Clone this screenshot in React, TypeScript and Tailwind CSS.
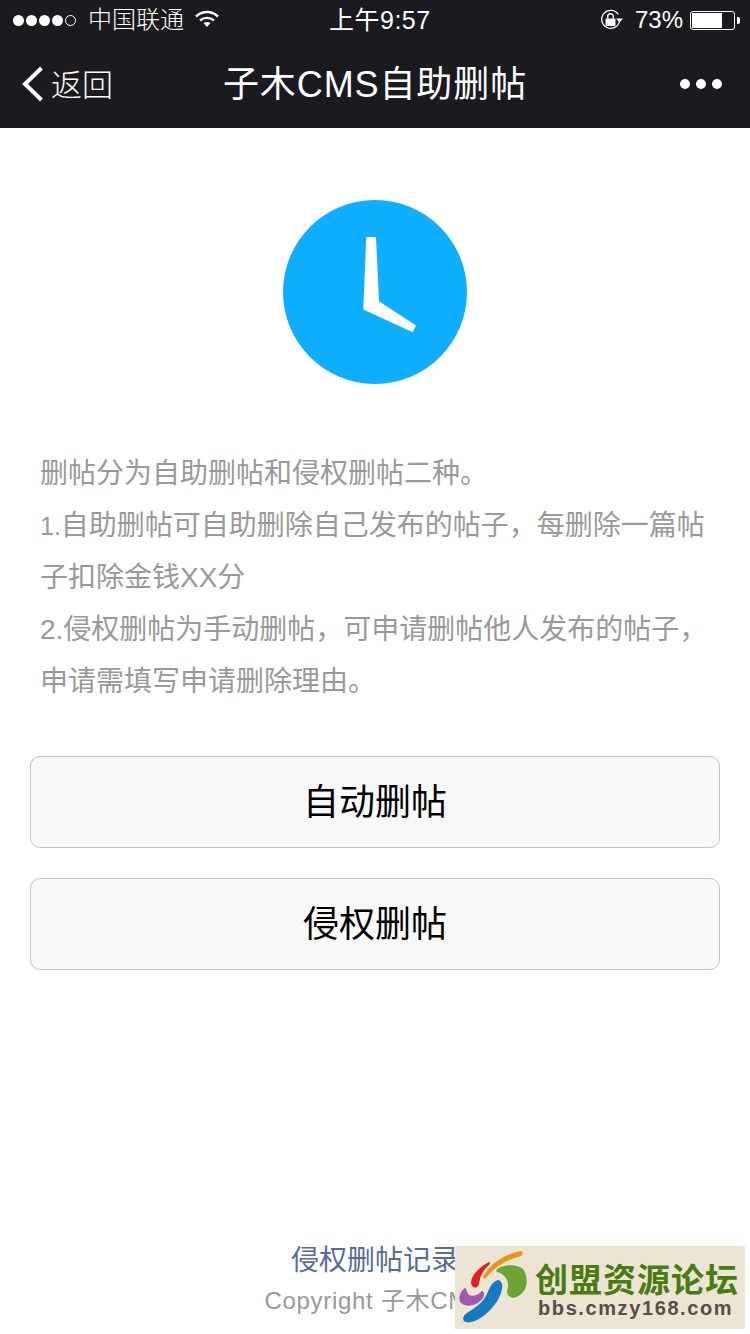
const sans = "font-['Liberation_Sans','Noto_Sans_CJK_SC',sans-serif]";

function StatusBar() {
    return (
        <div className="flex items-center justify-between h-10 pl-[13px] pr-[10px] text-white relative">
            <div className="flex items-center">
                <div className="flex items-center gap-[2px]">
                    <span className="w-[11px] h-[11px] rounded-full bg-white" />
                    <span className="w-[11px] h-[11px] rounded-full bg-white" />
                    <span className="w-[11px] h-[11px] rounded-full bg-white" />
                    <span className="w-[11px] h-[11px] rounded-full bg-white" />
                    <span className="w-[11px] h-[11px] rounded-full border border-white" />
                </div>
                <span className="ml-[12px] text-[24px] leading-none font-light">中国联通</span>
                <svg className="ml-[10px] mb-[3px]" width="26" height="19" viewBox="0 0 26 19" fill="none">
                    <path d="M2 7.5C8.5 1.5 17.5 1.5 24 7.5" stroke="#fff" strokeWidth="2.4" />
                    <path d="M6 11.5C10 8 16 8 20 11.5" stroke="#fff" strokeWidth="2.4" />
                    <path d="M9.5 14L13 18L16.5 14C14.5 12.5 11.5 12.5 9.5 14Z" fill="#fff" />
                </svg>
            </div>
            <div className="absolute left-[329px] top-[4px] text-[25px] leading-[32px] tracking-[0.5px]">上午9:57</div>
            <div className="flex items-center">
                <svg width="24" height="22" viewBox="0 0 24 22" fill="none">
                    <path d="M18.3 5.5A9 9 0 1 0 19.6 12" stroke="#fff" strokeWidth="1.3" />
                    <path d="M16 9.5H23L19.5 13.5Z" fill="#fff" />
                    <rect x="5.5" y="9.5" width="10" height="7.5" rx="1" fill="#fff" />
                    <path d="M7.7 9.5V7.5A2.8 2.8 0 0 1 13.3 7.5V9.5" stroke="#fff" strokeWidth="1.5" />
                </svg>
                <span className="ml-[11px] text-[24px] leading-none font-light">73%</span>
                <div className="ml-[7px] w-[45px] h-[19px] rounded-[3px] border border-white p-[1px]">
                    <div className="w-[30px] h-full bg-white" />
                </div>
                <div className="ml-[2px] w-[3px] h-[7px] bg-white rounded-r-[2px]" />
            </div>
        </div>
    );
}

function NavBar() {
    return (
        <div className="relative flex items-center justify-between h-[88px] pl-[22px] pr-[28px] text-white">
            <div className="flex items-center">
                <svg width="22" height="36" viewBox="0 0 22 36" fill="none">
                    <path d="M19.5 2L3 18L19.5 34" stroke="#fff" strokeWidth="4" />
                </svg>
                <span className="ml-[7px] mt-[2px] text-[31px] leading-none font-light">返回</span>
            </div>
            <div className="absolute inset-x-0 top-[23px] text-center text-[36px] leading-[44px] tracking-[0.9px]">子木CMS自助删帖</div>
            <div className="flex items-center gap-[6px]">
                <span className="w-[10px] h-[10px] rounded-full bg-white" />
                <span className="w-[10px] h-[10px] rounded-full bg-white" />
                <span className="w-[10px] h-[10px] rounded-full bg-white" />
            </div>
        </div>
    );
}

function ClockIcon() {
    return (
        <svg width="184" height="184" viewBox="0 0 184 184">
            <circle cx="92" cy="92" r="92" fill="#10aeff" />
            <path d="M83.3 37H93L96 101.2L133 125.5L129.7 132.2L80.3 109.5Z" fill="#fff" />
        </svg>
    );
}

function Watermark() {
    return (
        <div className="absolute left-[455px] top-[1246px] w-[290px] h-[83px] bg-[#ece5d3] overflow-hidden">
            <svg className="absolute left-0 top-0" width="80" height="83" viewBox="0 0 80 83">
                <path d="M28 31C34 18 50 8 66 5C69 6 68 9 64 11C50 14 40 21 31 32C29 33 28 32 28 31Z" fill="#e8971a" />
                <path d="M34 16C26 20 17 28 16 36C16 42 22 44 24 38C25 30 28 24 35 18C35 17 35 16 34 16Z" fill="#e02020" />
                <path d="M42 23C50 18 62 18 68 23C73 29 73 40 68 46C64 51 58 53 55 51C51 48 52 44 53 41C54 35 50 28 42 26C41 25 41 24 42 23Z" fill="#6aa535" />
                <path d="M10 42C4 46 3 54 6 57C12 62 22 60 28 52C30 49 29 45 27 45C23 49 18 51 14 49C12 47 12 43 10 42Z" fill="#9c5bb0" />
                <path d="M43 34C47 35 48 39 47 43C45 53 38 63 27 71C20 76 12 78 9 75C7 72 9 69 12 67C20 62 27 57 31 50C34 44 36 36 43 34Z" fill="#1a78c2" />
            </svg>
            <div className="absolute left-[80px] top-[20px] text-[33px] leading-[30px] font-bold text-[#4a7a12] tracking-[1px] whitespace-nowrap">创盟资源论坛</div>
            <div className="absolute left-[83px] top-[50px] text-[20px] leading-[24px] font-bold text-[#554f47] tracking-[1.6px] whitespace-nowrap">bbs.cmzy168.com</div>
        </div>
    );
}

export default function App() {
    return (
        <div className={`relative w-[750px] h-[1334px] bg-white overflow-hidden flex flex-col ${sans}`}>
            <div className="bg-[#1a1a1f] shrink-0">
                <StatusBar />
                <NavBar />
            </div>

            <div className="flex justify-center mt-[72px]">
                <ClockIcon />
            </div>

            {/* 1. is narrower in the reference, so the first rule line ends earlier */}
            <div className="mt-[64px] px-[40px] text-[28px] leading-[52px] text-[#999999]">
                <p>删帖分为自助删帖和侵权删帖二种。</p>
                <p><span className="text-[25px]">1.</span>自助删帖可自助删除自己发布的帖子，每删除一篇帖子扣除金钱XX分</p>
                <p>2.侵权删帖为手动删帖，可申请删帖他人发布的帖子，申请需填写申请删除理由。</p>
            </div>

            <div className="mt-[48px] px-[30px] flex flex-col gap-[30px]">
                <button className="h-[92px] pt-[1px] rounded-[10px] border border-[#c4c4c4] bg-[#f8f8f8] text-[36px] text-black">自动删帖</button>
                <button className="h-[92px] pt-[1px] rounded-[10px] border border-[#c4c4c4] bg-[#f8f8f8] text-[36px] text-black">侵权删帖</button>
            </div>

            <div className="mt-auto pb-[15px] text-center">
                <div className="text-[28px] leading-[36px] text-[#586c94]">侵权删帖记录</div>
                <div className="mt-[4px] text-[24px] leading-[36px] tracking-[0.7px] text-[#999999]">Copyright 子木CMS</div>
            </div>

            <Watermark />
        </div>
    );
}
